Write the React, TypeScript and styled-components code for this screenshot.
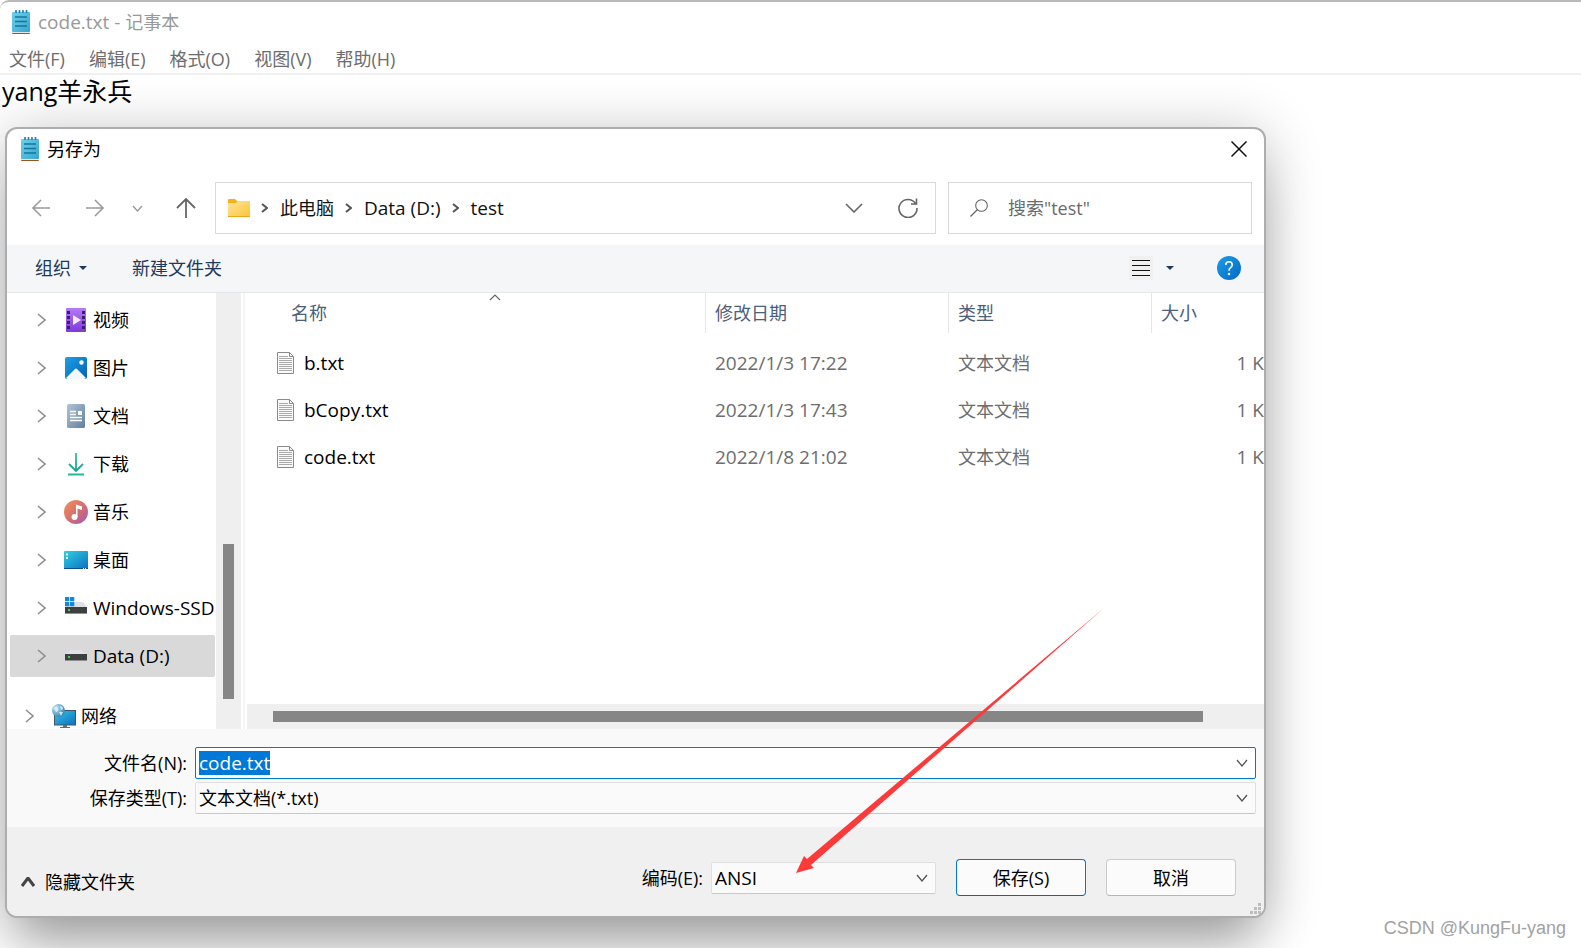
import React, { useEffect, useRef } from "react";
import styled, { createGlobalStyle } from "styled-components";

const uiFont = `"Open Sans", "Noto Sans CJK SC", sans-serif`;

const GlobalStyle = createGlobalStyle`
  *, *::before, *::after { box-sizing: border-box; }
  body { margin: 0; background: #fff; }
  button, input, select, textarea { font: inherit; color: inherit; margin: 0; }
  svg { display: block; flex: none; }
`;

/* Latin text runs a size larger than the Chinese text beside it. */
const Latin = styled.span`
  font-size: 19px;
`;

/* ---------- Notepad window ---------- */

const Notepad = styled.div`
  position: relative;
  display: flex;
  flex-direction: column;
  height: 100vh;
  min-height: 948px;
  overflow: hidden;
  background: #fff;
  border-top: 2px solid #b9b9b9;
  border-top-left-radius: 9px;
  font: 18px/24px ${uiFont};
  color: #000;
`;

const TitleBar = styled.header`
  display: flex;
  align-items: center;
  gap: 8px;
  height: 40px;
  padding-left: 12px;
  color: #999;
`;

const MenuBar = styled.nav`
  display: flex;
  align-items: center;
  gap: 24px;
  height: 33px;
  padding: 2px 9px 0;
  border-bottom: 2px solid #f0f0f0;
`;

const MenuButton = styled.button`
  padding: 0;
  border: 0;
  background: none;
  color: #6d6d6d;
`;

const Editor = styled.textarea`
  flex: 1;
  width: 100%;
  padding: 0 2px;
  border: 0;
  outline: 0;
  resize: none;
  background: transparent;
  font: 25px/33px ${uiFont};
`;

const Watermark = styled.p`
  position: absolute;
  right: 15px;
  bottom: 8px;
  margin: 0;
  font: 18px/24px "Liberation Sans", sans-serif;
  color: #a2a2a2;
  text-shadow: 0 0 1px #fff;
`;

/* ---------- Save dialog ---------- */

const Dialog = styled.section`
  position: absolute;
  top: 125px;
  left: 5px;
  right: 315px;
  border: 2px solid #adadad;
  border-radius: 12px;
  background: #fff;
  box-shadow: 0 40px 48px -12px rgba(0, 0, 0, 0.25), 0 6px 56px rgba(0, 0, 0, 0.24);
`;

const DialogTitle = styled.div`
  display: flex;
  align-items: center;
  gap: 8px;
  height: 40px;
  padding: 0 16px 0 14px;
`;

const Heading = styled.h1`
  flex: 1;
  margin: 0;
  font-size: 18px;
  font-weight: 400;
`;

const IconButton = styled.button<{ $w?: number }>`
  display: grid;
  place-items: center;
  width: ${(p) => p.$w ?? 18}px;
  height: 24px;
  padding: 0;
  border: 0;
  background: none;
`;

const NavRow = styled.div`
  display: flex;
  align-items: center;
  height: 76px;
  padding: 2px 12px 0 6px;
`;

const NavButtons = styled.div`
  display: grid;
  grid-template-columns: 54px 54px 33px 61px;
  justify-items: center;
`;

const FieldBox = styled.div`
  display: flex;
  align-items: center;
  height: 52px;
  border: 1px solid #d9d9d9;
`;

const AddressBox = styled(FieldBox)`
  flex: 1;
  padding: 0 9px 0 12px;
`;

const Crumbs = styled.ol`
  display: flex;
  flex: 1;
  margin: 0;
  padding: 0;
  list-style: none;
`;

const Crumb = styled.li`
  display: flex;
  align-items: center;
  gap: 12px;
  padding-left: 11px;
`;

const CrumbLink = styled.a`
  color: #111;
  text-decoration: none;
`;

const SearchBox = styled(FieldBox)`
  width: 304px;
  margin-left: 12px;
  padding-left: 21px;
  gap: 20px;
`;

const SearchInput = styled.input`
  flex: 1;
  min-width: 0;
  padding: 0;
  border: 0;
  outline: 0;
  background: none;
  &::placeholder { color: #6b6b6b; opacity: 1; }
`;

const Toolbar = styled.div`
  display: flex;
  align-items: center;
  height: 48px;
  padding: 0 23px 1px 28px;
  background: #f4f6f8;
  border-bottom: 1px solid #e4e6e8;
`;

const ToolButton = styled.button`
  display: flex;
  align-items: center;
  gap: 8px;
  margin-right: 45px;
  padding: 0;
  border: 0;
  background: none;
  color: #1e395b;
`;

const ToolGroup = styled.div`
  display: flex;
  align-items: center;
  gap: 8px;
  margin-left: auto;
  margin-right: 38px;
`;

const Browser = styled.div`
  display: flex;
  height: 436px;
`;

const Tree = styled.ul`
  display: flex;
  flex-direction: column;
  gap: 6px;
  width: 209px;
  margin: 0;
  padding: 6px 1px 0 3px;
  list-style: none;
  overflow: hidden;
`;

const TreeItem = styled.li<{ $selected?: boolean; $root?: boolean }>`
  display: flex;
  flex: none;
  align-items: center;
  height: 42px;
  margin-top: ${(p) => (p.$root ? 12 : 0)}px;
  padding-left: ${(p) => (p.$root ? 15 : 27)}px;
  border-radius: 2px;
  background: ${(p) => (p.$selected ? "#d9d9d9" : "transparent")};
  white-space: nowrap;
`;

const TreeIcon = styled.span`
  display: grid;
  place-items: center;
  width: 24px;
  margin: 0 5px 0 18px;
`;

const VerticalTrack = styled.div`
  display: flex;
  justify-content: center;
  align-items: flex-end;
  width: 25px;
  padding-bottom: 30px;
  background: #efefef;
`;

const VerticalThumb = styled.div`
  width: 11px;
  height: 155px;
  background: #868686;
`;

const Files = styled.div`
  display: flex;
  flex: 1;
  flex-direction: column;
  min-width: 0;
  margin-left: 2px;
  border-left: 2px solid #f5f5f5;
`;

const FileTable = styled.table`
  width: 100%;
  table-layout: fixed;
  border-collapse: separate;
  border-spacing: 0;
  tbody::before { content: ""; display: block; height: 6px; }
`;

const HeadCell = styled.th<{ $w?: number; $first?: boolean }>`
  position: relative;
  width: ${(p) => (p.$w ? `${p.$w}px` : "auto")};
  height: 40px;
  padding: 0 0 0 ${(p) => (p.$first ? 46 : 9)}px;
  border-left: ${(p) => (p.$first ? "0" : "1px solid #e5e5e5")};
  text-align: left;
  font-weight: 400;
  color: #4c607a;
`;

const SortMark = styled.span`
  position: absolute;
  top: 1px;
  left: calc(50% + 14px);
`;

const Cell = styled.td<{ $right?: boolean }>`
  height: 47px;
  padding: 0 0 0 ${(p) => (p.$right ? 0 : 10)}px;
  text-align: ${(p) => (p.$right ? "right" : "left")};
  color: #6d6d6d;
  white-space: nowrap;
`;

const NameCell = styled.td`
  padding: 0 0 0 32px;
`;

const FileName = styled.span`
  display: flex;
  align-items: center;
  gap: 10px;
  font-size: 19px;
`;

const HorizontalTrack = styled.div`
  height: 25px;
  margin: auto 0 0 2px;
  padding: 7px 61px 7px 26px;
  background: #efefef;
`;

const HorizontalThumb = styled.div`
  height: 11px;
  background: #868686;
`;

const Form = styled.div`
  display: grid;
  grid-template-columns: 180px 1fr;
  align-items: center;
  column-gap: 8px;
  row-gap: 3px;
  padding: 18px 8px 13px 0;
  background: #f9f9f9;
`;

const Label = styled.label`
  text-align: right;
`;

const Combo = styled.div<{ $active?: boolean; $w?: number }>`
  display: grid;
  align-items: center;
  width: ${(p) => (p.$w ? `${p.$w}px` : "auto")};
  height: 32px;
  border: 1px solid ${(p) => (p.$active ? "#0078d4" : "#dfdfdf")};
  border-bottom-color: ${(p) => (p.$active ? "#0078d4" : "#c8c8c8")};
  border-radius: 2px;
  background: ${(p) => (p.$active ? "#fff" : "#fafafa")};
  & > * { grid-area: 1 / 1; }
  & > svg { justify-self: end; margin-right: 7px; pointer-events: none; }
`;

const ComboInput = styled.input`
  width: 100%;
  padding: 0 3px;
  border: 0;
  outline: 0;
  background: none;
  font-size: 19px;
  line-height: 24px;
  &::selection { background: #0078d7; color: #fff; }
`;

const ComboSelect = styled.select<{ $latin?: boolean }>`
  width: 100%;
  height: 28px;
  padding: 0 3px;
  border: 0;
  outline: 0;
  appearance: none;
  background: none;
  font-size: ${(p) => (p.$latin ? 19 : 18)}px;
`;

const Footer = styled.footer`
  display: flex;
  align-items: center;
  height: 89px;
  padding: 26px 28px 14px 14px;
  border-radius: 0 0 10px 10px;
  background: #f0f0f0;
`;

const HideButton = styled.button`
  display: flex;
  align-items: center;
  gap: 10px;
  margin-right: auto;
  padding: 8px 0 0;
  border: 0;
  background: none;
`;

const EncodingField = styled.div`
  display: flex;
  align-items: center;
  gap: 8px;
`;

const ActionButton = styled.button<{ $primary?: boolean }>`
  width: 130px;
  height: 37px;
  margin-left: 20px;
  border: 1px solid ${(p) => (p.$primary ? "#0078d4" : "#cccccc")};
  border-bottom-color: ${(p) => (p.$primary ? "#0067c0" : "#b5b5b5")};
  border-radius: 4px;
  background: #fbfbfb;
`;

const Grip = styled.svg`
  position: absolute;
  right: 3px;
  bottom: 2px;
`;

const PointerArrow = styled.svg`
  position: absolute;
  top: 479px;
  right: 160px;
  pointer-events: none;
`;

/* ---------- Icons ---------- */

const NotepadIcon = () => (
  <svg width="18" height="25" viewBox="0 0 18 25">
    <defs>
      <linearGradient id="pad" x1="0" y1="0" x2="1" y2="1">
        <stop offset="0" stopColor="#6fd0ea" />
        <stop offset="1" stopColor="#35a5cf" />
      </linearGradient>
    </defs>
    <rect y="22" width="18" height="2" rx="1" fill="#a3511c" />
    <rect y="21" width="18" height="2" fill="#e6e6e6" />
    <rect y="2" width="18" height="20" rx="1" fill="url(#pad)" />
    <path d="M4 0v3M7.500 0v3M11 0v3M14.500 0v3" stroke="#1b7fa5" strokeWidth="1.600" />
    <path d="M3 7h12M3 11.500h12M3 16h12" stroke="#14769b" strokeWidth="1.400" />
  </svg>
);

type ChevronProps = { dir: "up" | "down" | "right"; w: number; h: number; color: string; stroke?: number };
const Chevron = ({ dir, w, h, color, stroke = 1.4 }: ChevronProps) => {
  const d =
    dir === "down"
      ? `M1 1L${w / 2} ${h - 1}L${w - 1} 1`
      : dir === "up"
      ? `M1 ${h - 1}L${w / 2} 1L${w - 1} ${h - 1}`
      : `M1 1L${w - 1} ${h / 2}L1 ${h - 1}`;
  return (
    <svg width={w} height={h} viewBox={`0 0 ${w} ${h}`}>
      <path d={d} fill="none" stroke={color} strokeWidth={stroke} />
    </svg>
  );
};

const Caret = () => (
  <svg width="8" height="4" viewBox="0 0 8 4">
    <path d="M0 0h8L4 4z" fill="#1e395b" />
  </svg>
);

const ArrowIcon = ({ d, color, stroke = 1.6 }: { d: string; color: string; stroke?: number }) => (
  <svg width="20" height="20" viewBox="0 0 20 20">
    <path d={d} fill="none" stroke={color} strokeWidth={stroke} />
  </svg>
);

const FolderIcon = () => (
  <svg width="22" height="18" viewBox="0 0 22 18">
    <defs>
      <linearGradient id="folder" x1="0" y1="0" x2="1" y2="1">
        <stop offset="0" stopColor="#ffe59a" />
        <stop offset="1" stopColor="#fcc435" />
      </linearGradient>
    </defs>
    <path d="M0 1q0-1 1-1h6l2 2h12q1 0 1 1v5H0z" fill="#f5b01a" />
    <path d="M0 5q0-1 1-1h7l2-2h11q1 0 1 1v14q0 1-1 1H1q-1 0-1-1z" fill="url(#folder)" />
    <path d="M0 17.500h22" stroke="#e9a81c" />
  </svg>
);

const VideoIcon = () => (
  <svg width="20" height="24" viewBox="0 0 20 24">
    <defs>
      <linearGradient id="video" x1="0" y1="0" x2="0" y2="1">
        <stop offset="0" stopColor="#b47bf5" />
        <stop offset="1" stopColor="#8038dc" />
      </linearGradient>
    </defs>
    <rect width="20" height="24" rx="1" fill="url(#video)" />
    <path d="M1 3h3v3H1zM1 8h3v3H1zM1 13h3v3H1zM1 18h3v3H1zM16 3h3v3h-3zM16 8h3v3h-3zM16 13h3v3h-3zM16 18h3v3h-3z" fill="#3c1d6e" />
    <path d="M7 7l8 5-8 5z" fill="#f1eafa" />
  </svg>
);

const PictureIcon = () => (
  <svg width="22" height="22" viewBox="0 0 22 22">
    <defs>
      <linearGradient id="picture" x1="0" y1="0" x2="1" y2="1">
        <stop offset="0" stopColor="#1fa0e6" />
        <stop offset="1" stopColor="#0560b5" />
      </linearGradient>
    </defs>
    <rect width="22" height="22" rx="2" fill="url(#picture)" />
    <path d="M1 21l9-9q1-1 2 0l9 9q-1 1-2 1H3q-1 0-2-1z" fill="#f2f7fc" />
    <circle cx="16.500" cy="5.500" r="2.200" fill="#fff" />
  </svg>
);

const DocumentIcon = () => (
  <svg width="18" height="24" viewBox="0 0 18 24">
    <defs>
      <linearGradient id="document" x1="0" y1="0" x2="1" y2="1">
        <stop offset="0" stopColor="#b0c4d6" />
        <stop offset="1" stopColor="#62809f" />
      </linearGradient>
    </defs>
    <rect width="18" height="24" rx="1.500" fill="url(#document)" />
    <path d="M3 7.500h6M3 10.500h6M3 13.500h12M3 16.500h12" stroke="#fff" strokeWidth="1.300" />
    <rect x="11" y="7" width="4" height="4" fill="#fff" />
  </svg>
);

const DownloadIcon = () => (
  <svg width="18" height="24" viewBox="0 0 18 24">
    <defs>
      <linearGradient id="download" gradientUnits="userSpaceOnUse" x1="0" y1="0" x2="0" y2="24">
        <stop offset="0" stopColor="#2fca8c" />
        <stop offset="0.8" stopColor="#11a595" />
        <stop offset="1" stopColor="#2bc48c" />
      </linearGradient>
    </defs>
    <path d="M9 1v17.500M2 12l7 7 7-7M1 22.500h16" fill="none" stroke="url(#download)" strokeWidth="1.800" />
  </svg>
);

const MusicIcon = () => (
  <svg width="24" height="24" viewBox="0 0 24 24">
    <defs>
      <linearGradient id="music" x1="0" y1="0" x2="1" y2="1">
        <stop offset="0.1" stopColor="#f08a55" />
        <stop offset="0.6" stopColor="#cf6a78" />
        <stop offset="1" stopColor="#9a5ac0" />
      </linearGradient>
    </defs>
    <circle cx="12" cy="12" r="12" fill="url(#music)" />
    <path d="M12 4.500l6 2v3.500l-4.500-1.500V17h-1.500z" fill="#fff" />
    <circle cx="10.500" cy="17" r="3" fill="#fff" />
  </svg>
);

const DesktopIcon = () => (
  <svg width="24" height="18" viewBox="0 0 24 18">
    <defs>
      <linearGradient id="desktop" x1="0" y1="0" x2="1" y2="1">
        <stop offset="0" stopColor="#2fd0e0" />
        <stop offset="1" stopColor="#0d6fc4" />
      </linearGradient>
    </defs>
    <rect width="24" height="18" rx="1" fill="url(#desktop)" />
    <path d="M2 2.500h2v2H2zM2 6h2v2H2z" fill="#fff" />
    <path d="M0 17.500h24" stroke="#0a4f86" />
    <path d="M19 17.500h1M21 17.500h1" stroke="#fff" />
  </svg>
);

const DriveIcon = ({ system }: { system?: boolean }) => (
  <svg width="22" height={system ? 22 : 14} viewBox={system ? "0 0 22 22" : "0 5 22 14"}>
    <path d={system ? "M9 5h9l4 5H0z" : "M5 6h12l5 5H0z"} fill="#dfe1e4" />
    <rect y="10" width="22" height="7" fill="#3d3f41" />
    <rect y="16" width="22" height="1" fill="#8d8f91" />
    <rect x="3" y="12" width="2" height="2" fill="#2fe03a" />
    {system && <path d="M0 0h4.300v4.300H0zM5 0h4.300v4.300H5zM0 5h4.300v4.300H0zM5 5h4.300v4.300H5z" fill="#1487d8" />}
  </svg>
);

const NetworkIcon = () => (
  <svg width="24" height="24" viewBox="0 0 24 24">
    <defs>
      <linearGradient id="screen" x1="0" y1="0" x2="1" y2="1">
        <stop offset="0" stopColor="#35c5e3" />
        <stop offset="1" stopColor="#0e6fc0" />
      </linearGradient>
      <radialGradient id="globe" cx="0.3" cy="0.3" r="0.8">
        <stop offset="0" stopColor="#c2e5f5" />
        <stop offset="1" stopColor="#2a7fb0" />
      </radialGradient>
    </defs>
    <rect x="2.500" y="6.500" width="21" height="14.500" fill="url(#screen)" stroke="#3f5566" />
    <path d="M11 21h4v2h3v1H8v-1h3z" fill="#666d73" />
    <circle cx="6.500" cy="6.500" r="6.500" fill="url(#globe)" />
    <path d="M2 4q3-3 4 0t-2 4zM8 2q3 0 3 3l-2 1zM7 8l4 0-2 4z" fill="#e8f5fb" opacity="0.8" />
  </svg>
);

const TextFileIcon = () => (
  <svg width="17" height="22" viewBox="0 0 17 22">
    <path d="M.500 .500h12l4 4v17H.500z" fill="#fafafa" stroke="#8a8a8a" />
    <path d="M12.500 .500v4h4" fill="none" stroke="#8a8a8a" />
    <path d="M2 4.500h9M2 6.500h13M2 8.500h13M2 10.500h13M2 12.500h13M2 14.500h13M2 16.500h13M2 18.500h13" stroke="#aaa" />
  </svg>
);

const HelpIcon = () => (
  <svg width="24" height="24" viewBox="0 0 24 24">
    <defs>
      <linearGradient id="help" x1="0" y1="0" x2="1" y2="1">
        <stop offset="0" stopColor="#1c9de4" />
        <stop offset="1" stopColor="#0468c8" />
      </linearGradient>
    </defs>
    <circle cx="12" cy="12" r="12" fill="url(#help)" />
    <path d="M8.800 9q0-3.200 3.200-3.200T15.200 8.800q0 1.800-1.600 2.800T12 14.800" fill="none" stroke="#fff" strokeWidth="1.600" />
    <circle cx="12" cy="18" r="1.200" fill="#fff" />
  </svg>
);

/* ---------- Data ---------- */

const menus = ["文件(F)", "编辑(E)", "格式(O)", "视图(V)", "帮助(H)"];
const crumbs = [{ name: "此电脑" }, { name: "Data (D:)", latin: true }, { name: "test", latin: true }];

const places = [
  { name: "视频", icon: <VideoIcon /> },
  { name: "图片", icon: <PictureIcon /> },
  { name: "文档", icon: <DocumentIcon /> },
  { name: "下载", icon: <DownloadIcon /> },
  { name: "音乐", icon: <MusicIcon /> },
  { name: "桌面", icon: <DesktopIcon /> },
  { name: "Windows-SSD", icon: <DriveIcon system />, latin: true },
  { name: "Data (D:)", icon: <DriveIcon />, latin: true, selected: true },
  { name: "网络", icon: <NetworkIcon />, root: true },
];

const files = [
  { name: "b.txt", date: "2022/1/3 17:22" },
  { name: "bCopy.txt", date: "2022/1/3 17:43" },
  { name: "code.txt", date: "2022/1/8 21:02" },
];

export default function App() {
  const nameRef = useRef<HTMLInputElement>(null);

  useEffect(() => {
    nameRef.current?.focus();
    nameRef.current?.select();
  }, []);

  return (
    <Notepad>
      <GlobalStyle />
      <TitleBar>
        <NotepadIcon />
        <span>
          <Latin>code.txt - </Latin>记事本
        </span>
      </TitleBar>
      <MenuBar>
        {menus.map((m) => (
          <MenuButton key={m}>{m}</MenuButton>
        ))}
      </MenuBar>
      <Editor aria-label="文本编辑器" defaultValue="yang羊永兵" spellCheck={false} />

      <Dialog role="dialog" aria-labelledby="dialog-title">
        <DialogTitle>
          <NotepadIcon />
          <Heading id="dialog-title">另存为</Heading>
          <IconButton aria-label="关闭">
            <svg width="16" height="16" viewBox="0 0 16 16">
              <path d="M.500 .500l15 15M15.500 .500l-15 15" stroke="#111" strokeWidth="1.500" />
            </svg>
          </IconButton>
        </DialogTitle>

        <NavRow>
          <NavButtons>
            <IconButton aria-label="后退">
              <ArrowIcon color="#9b9b9b" d="M19 10H2M10 2L2 10l8 8" />
            </IconButton>
            <IconButton aria-label="前进">
              <ArrowIcon color="#9b9b9b" d="M1 10h17M10 2l8 8-8 8" />
            </IconButton>
            <IconButton aria-label="最近浏览的位置">
              <Chevron dir="down" w={11} h={7} color="#9b9b9b" />
            </IconButton>
            <IconButton aria-label="上移">
              <ArrowIcon color="#666" stroke={1.8} d="M10 20V2M1 10l9-9 9 9" />
            </IconButton>
          </NavButtons>
          <AddressBox>
            <FolderIcon />
            <Crumbs>
              {crumbs.map((c) => (
                <Crumb key={c.name}>
                  <Chevron dir="right" w={7} h={10} color="#555" stroke={2} />
                  <CrumbLink href="#">{c.latin ? <Latin>{c.name}</Latin> : c.name}</CrumbLink>
                </Crumb>
              ))}
            </Crumbs>
            <IconButton aria-label="展开地址" $w={72}>
              <Chevron dir="down" w={18} h={10} color="#666" stroke={1.6} />
            </IconButton>
            <IconButton aria-label="刷新" $w={36}>
              <svg width="20" height="20" viewBox="0 0 20 20">
                <path d="M17.500 5.500A9 9 0 1 0 19 10M18.500 .500v5.500h-5.500" fill="none" stroke="#666" strokeWidth="1.600" />
              </svg>
            </IconButton>
          </AddressBox>
          <SearchBox>
            <svg width="18" height="18" viewBox="0 0 18 18">
              <path d="M.500 17.500l7-7" stroke="#666" strokeWidth="1.300" />
              <circle cx="11.500" cy="6.500" r="5.800" fill="none" stroke="#666" strokeWidth="1.100" />
            </svg>
            <SearchInput aria-label="搜索" placeholder={'搜索"test"'} />
          </SearchBox>
        </NavRow>

        <Toolbar>
          <ToolButton>
            组织
            <Caret />
          </ToolButton>
          <ToolButton>新建文件夹</ToolButton>
          <ToolGroup>
            <IconButton aria-label="更改视图" $w={24}>
              <svg width="24" height="24" viewBox="0 0 24 24">
                <rect width="24" height="24" fill="#f0f0f0" />
                <path d="M3 4.500h18M3 9.500h18M3 14.500h18M3 19.500h18" stroke="#111" />
              </svg>
            </IconButton>
            <IconButton aria-label="更多选项">
              <Caret />
            </IconButton>
          </ToolGroup>
          <IconButton aria-label="帮助" $w={24}>
            <HelpIcon />
          </IconButton>
        </Toolbar>

        <Browser>
          <Tree>
            {places.map((p) => (
              <TreeItem key={p.name} $selected={p.selected} $root={p.root}>
                <Chevron dir="right" w={9} h={14} color="#8f8f8f" stroke={1.6} />
                <TreeIcon>{p.icon}</TreeIcon>
                {p.latin ? <Latin>{p.name}</Latin> : p.name}
              </TreeItem>
            ))}
          </Tree>
          <VerticalTrack>
            <VerticalThumb />
          </VerticalTrack>
          <Files>
            <FileTable>
              <thead>
                <tr>
                  <HeadCell $first>
                    名称
                    <SortMark>
                      <Chevron dir="up" w={12} h={7} color="#666" stroke={1.2} />
                    </SortMark>
                  </HeadCell>
                  <HeadCell $w={243}>修改日期</HeadCell>
                  <HeadCell $w={203}>类型</HeadCell>
                  <HeadCell $w={113}>大小</HeadCell>
                </tr>
              </thead>
              <tbody>
                {files.map((f) => (
                  <tr key={f.name}>
                    <NameCell>
                      <FileName>
                        <TextFileIcon />
                        {f.name}
                      </FileName>
                    </NameCell>
                    <Cell>
                      <Latin>{f.date}</Latin>
                    </Cell>
                    <Cell>文本文档</Cell>
                    <Cell $right>
                      <Latin>1 K</Latin>
                    </Cell>
                  </tr>
                ))}
              </tbody>
            </FileTable>
            <HorizontalTrack>
              <HorizontalThumb />
            </HorizontalTrack>
          </Files>
        </Browser>

        <Form>
          <Label htmlFor="file-name">文件名(N):</Label>
          <Combo $active>
            <ComboInput id="file-name" ref={nameRef} defaultValue="code.txt" spellCheck={false} />
            <Chevron dir="down" w={12} h={8} color="#555" stroke={1.3} />
          </Combo>
          <Label htmlFor="file-type">保存类型(T):</Label>
          <Combo>
            <ComboSelect id="file-type">
              <option>文本文档(*.txt)</option>
            </ComboSelect>
            <Chevron dir="down" w={12} h={8} color="#555" stroke={1.3} />
          </Combo>
        </Form>

        <Footer>
          <HideButton>
            <Chevron dir="up" w={14} h={10} color="#444" stroke={3} />
            隐藏文件夹
          </HideButton>
          <EncodingField>
            <Label htmlFor="encoding">编码(E):</Label>
            <Combo $w={225}>
              <ComboSelect id="encoding" $latin>
                <option>ANSI</option>
              </ComboSelect>
              <Chevron dir="down" w={12} h={8} color="#555" stroke={1.3} />
            </Combo>
          </EncodingField>
          <ActionButton $primary>保存(S)</ActionButton>
          <ActionButton>取消</ActionButton>
        </Footer>

        <Grip width="11" height="11" viewBox="0 0 11 11">
          <path d="M8 0h3v3H8zM4 4h3v3H4zM8 4h3v3H8zM0 8h3v3H0zM4 8h3v3H4zM8 8h3v3H8z" fill="#bdbdbd" />
        </Grip>
        <PointerArrow width="308" height="265" viewBox="0 0 308 265">
          <path d="M308 0L11 251L8 248L0 265L18 260L15 257Z" fill="#fd3a3a" />
        </PointerArrow>
      </Dialog>

      <Watermark>CSDN @KungFu-yang</Watermark>
    </Notepad>
  );
}
